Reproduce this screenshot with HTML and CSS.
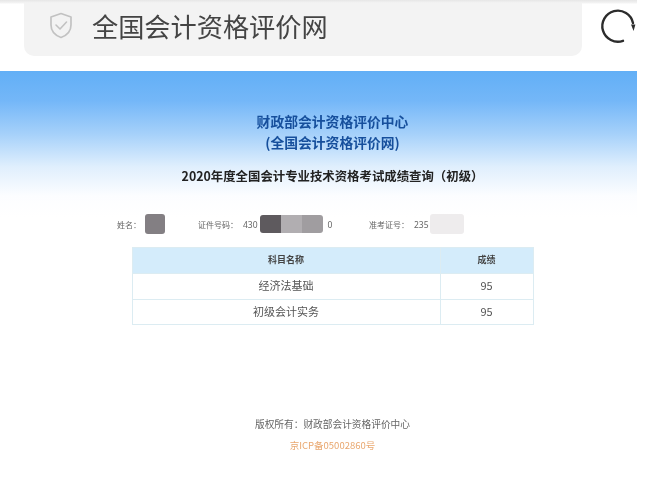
FILE: index.html
```html
<!DOCTYPE html>
<html lang="zh-CN">
<head>
<meta charset="utf-8">
<title>全国会计资格评价网</title>
<link rel="stylesheet" href="styles.css">
</head>
<body>
<div class="page">
  <header class="browser">
    <div class="address">
      <svg class="shield" viewBox="0 0 24 27" width="24" height="27" aria-hidden="true">
        <path d="M12 1.5 L22 5 V13 C22 19.5 17.5 23.5 12 25.5 C6.5 23.5 2 19.5 2 13 V5 Z" fill="none" stroke="#c2c2c2" stroke-width="1.7" stroke-linejoin="round"/>
        <path d="M7 13 L11 17 L17.5 10" fill="none" stroke="#c2c2c2" stroke-width="1.6" stroke-linecap="round" stroke-linejoin="round"/>
      </svg>
      <span class="site">全国会计资格评价网</span>
    </div>
    <svg class="reload" viewBox="0 0 36 36" width="36" height="36" aria-hidden="true">
      <path d="M23 32.8 A15.5 15.5 0 1 1 33 15" fill="none" stroke="#2c2c2c" stroke-width="2.4" stroke-linecap="round"/>
      <path d="M31 16.5 L35.4 16.5 L33.6 23 Z" fill="#2c2c2c"/>
    </svg>
  </header>
  <main class="content">
    <div class="inner">
      <h1 class="org">财政部会计资格评价中心<br>(全国会计资格评价网)</h1>
      <h2 class="subject">2020年度全国会计专业技术资格考试成绩查询&#xFF08;初级&#xFF09;</h2>
      <div class="info">
        <div class="field field-name"><span>姓名&#xFF1A;</span><i class="mask mask-name"></i></div>
        <div class="field field-id"><span>证件号码&#xFF1A;</span><span class="num">430</span>
          <span class="mask-id"><i class="seg seg-dark"></i><i class="seg seg-light"></i><i class="seg seg-mid"></i></span>
          <span class="num">0</span></div>
        <div class="field field-ticket"><span>准考证号&#xFF1A;</span><span class="num">235</span><i class="mask mask-ticket"></i></div>
      </div>
      <table class="scores">
        <thead><tr><th>科目名称</th><th class="col-score">成绩</th></tr></thead>
        <tbody>
          <tr><td>经济法基础</td><td>95</td></tr>
          <tr><td>初级会计实务</td><td>95</td></tr>
        </tbody>
      </table>
      <footer class="foot">
        <p class="copy">版权所有&#xFF1A;财政部会计资格评价中心</p>
        <p class="icp">京ICP备05002860号</p>
      </footer>
    </div>
  </main>
</div>
</body>
</html>
```
FILE: styles.css
```css
* { box-sizing: border-box; }
html, body { margin: 0; padding: 0; background: #fff; }
body { font-family: "Noto Sans CJK SC", "Liberation Sans", sans-serif; }
.page { width: 650px; height: 503px; overflow: hidden; }

.browser {
  width: 637px;
  height: 71px;
  display: flex;
  align-items: flex-start;
  background: linear-gradient(#e6e6e6 0, #f4f4f4 3px, #fff 4px);
}
.address {
  margin: 3px 0 0 24px;
  width: 558px;
  height: 53px;
  background: #f3f3f3;
  border-radius: 0 0 10px 10px;
  display: flex;
  align-items: center;
  padding: 0 0 8px 25px;
}
.shield { flex: none; filter: blur(.4px); }
.site {
  margin-left: 19px;
  font-size: 26.2px;
  line-height: 36px;
  color: #444;
  filter: blur(.4px);
}
.reload { margin: 8px 0 0 18px; flex: none; filter: blur(.3px); overflow: visible; }

.content {
  width: 637px;
  height: 432px;
  background: linear-gradient(#62aff6 0, #74b7f8 30px, #a4d0fa 62px, #e0effd 96px, #fcfdff 125px, #fff 146px);
}
.inner { padding: 40px 0 0 28px; display: flex; flex-direction: column; align-items: center; }

.org {
  margin: 0;
  font-size: 13.8px;
  line-height: 21px;
  font-weight: 700;
  color: #164f9c;
  text-align: center;
  filter: blur(.35px);
}
.subject {
  margin: 13px 0 0;
  font-size: 12.4px;
  line-height: 20px;
  font-weight: 700;
  color: #222;
  filter: blur(.3px);
}
.info {
  margin-top: 27px;
  width: 100%;
  height: 22px;
  display: flex;
  align-items: center;
  padding-left: 89px;
  font-size: 8px;
  color: #666;
}
.info > .field { display: flex; align-items: center; filter: blur(.3px); }
.field-name { width: 81px; }
.field-id { width: 171px; }
.num { font-family: "Noto Sans", sans-serif; margin-left: 5px; font-size: 8.5px; }
.mask { display: block; height: 20px; border-radius: 3px; }
.mask-name { width: 20px; margin-left: 4px; background: #837f83; }
.mask-ticket { width: 34px; margin-left: 1px; background: #eeeced; }
.mask-id { display: flex; margin-left: 2px; height: 18px; }
.seg { display: block; height: 100%; }
.seg-dark { width: 21px; background: #5e5a5e; border-radius: 3px 0 0 3px; }
.seg-light { width: 21px; background: #b1aeb1; }
.seg-mid { width: 21px; background: #a09da0; border-radius: 0 3px 3px 0; }

.scores {
  margin-top: 12px;
  width: 402px;
  table-layout: fixed;
  border-collapse: collapse;
  color: #444;
  filter: blur(.3px);
}
.scores th, .scores td {
  border: 1px solid #dcecf2;
  text-align: center;
  padding: 0 0 2px;
  height: 25.5px;
}
.scores th { background: #d4ecfb; font-size: 9px; font-weight: 700; color: #444; height: 26px; }
.scores td { font-size: 11px; color: #555; }
.col-score { width: 93px; }

.foot { margin-top: 89px; text-align: center; filter: blur(.3px); }
.foot p { margin: 0; }
.copy { font-size: 9.7px; line-height: 21px; color: #666; }
.icp { font-size: 9.5px; line-height: 21px; color: #e9a76e; }
```
